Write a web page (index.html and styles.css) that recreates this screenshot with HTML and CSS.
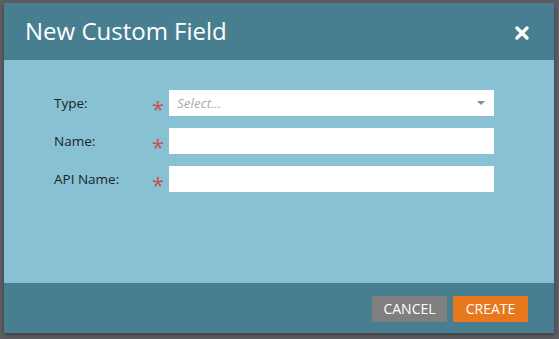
FILE: index.html
```html
<!DOCTYPE html>
<html>
<head>
<meta charset="utf-8">
<link rel="stylesheet" href="styles.css">
</head>
<body>
<div class="dialog">
  <div class="header">
    <span class="title">New Custom Field</span>
    <svg class="close" width="14" height="14" viewBox="0 0 14 14"><path d="M2 2 L12 12 M12 2 L2 12" stroke="#fff" stroke-width="3.4" stroke-linecap="round"/></svg>
  </div>
  <div class="body">
    <div class="row">
      <span class="label">Type:</span>
      <span class="req">*</span>
      <div class="field select"><span class="placeholder">Select...</span><span class="arrow"></span></div>
    </div>
    <div class="row">
      <span class="label">Name:</span>
      <span class="req">*</span>
      <div class="field"></div>
    </div>
    <div class="row">
      <span class="label">API Name:</span>
      <span class="req">*</span>
      <div class="field"></div>
    </div>
  </div>
  <div class="footer">
    <button class="btn cancel">CANCEL</button>
    <button class="btn create">CREATE</button>
  </div>
</div>
</body>
</html>
```
FILE: styles.css
```css
html, body { margin: 0; padding: 0; }
body {
  background: #5f5d63;
  width: 559px;
  height: 339px;
  overflow: hidden;
  font-family: "Open Sans", "Noto Sans", sans-serif;
}
.dialog {
  margin: 3px 0 0 4px;
  width: 550px;
  height: 330px;
  display: flex;
  flex-direction: column;
  box-shadow: 0 2px 4px rgba(0,0,0,0.35);
}
.header {
  height: 57px;
  background: #477f91;
  display: flex;
  align-items: center;
  justify-content: space-between;
  padding: 0 25px 0 21px;
  box-sizing: border-box;
}
.title {
  color: #fff;
  font-size: 24px;
  line-height: 1;
  margin-top: -2px;
}
.close { display: block; margin-top: 2px; }
.body {
  flex: 1;
  background: #88c1d3;
  padding: 30px 0 0 50px;
  display: flex;
  flex-direction: column;
  gap: 12px;
}
.row {
  display: flex;
  align-items: center;
  height: 26px;
}
.label {
  width: 98px;
  font-size: 13.5px;
  color: #1e2428;
}
.req {
  width: 17px;
  color: #c9524e;
  font-size: 22px;
  line-height: 1;
  margin-top: 10px;
}
.field {
  width: 325px;
  height: 26px;
  background: #fff;
  box-sizing: border-box;
}
.select {
  display: flex;
  align-items: center;
  justify-content: space-between;
  padding: 0 9px 0 8px;
}
.placeholder {
  font-style: italic;
  font-size: 13.5px;
  color: #a9adb0;
}
.arrow {
  width: 0;
  height: 0;
  border-left: 4px solid transparent;
  border-right: 4px solid transparent;
  border-top: 4px solid #8a8a8a;
  margin-top: -1px;
}
.footer {
  height: 50px;
  background: #477f91;
  display: flex;
  justify-content: flex-end;
  align-items: center;
  gap: 6px;
  padding-right: 26px;
  padding-top: 1px;
  box-sizing: border-box;
}
.btn {
  width: 75px;
  height: 26px;
  border: 0;
  color: #fff;
  font-family: "Open Sans", "Noto Sans", sans-serif;
  font-size: 14px;
  padding: 0;
  cursor: pointer;
}
.cancel { background: #7f7f7f; }
.create { background: #e8781e; }
```
